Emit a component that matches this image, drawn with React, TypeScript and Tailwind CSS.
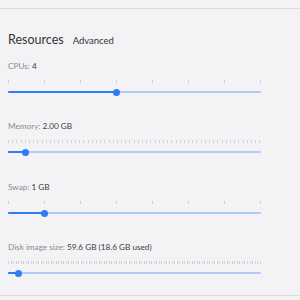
import React from 'react';

interface SliderRowProps {
    label: string;
    value: string;
    min: number;
    max: number;
    current: number;
    ticks: number;
    className?: string;
}

const SliderRow: React.FC<SliderRowProps> = ({ label, value, min, max, current, ticks, className }) => {
    const pct = ((current - min) / (max - min)) * 100;

    return (
        <div className={className}>
            <div className="h-3 leading-3 text-[8.2px] text-[#8a8a8e]">
                {label}: <span className="text-[#3c3c40]">{value}</span>
            </div>

            {/* tick marks */}
            <div className="mt-2 w-[253px] h-[3px] flex justify-between">
                {Array.from({ length: ticks }).map((_, i) => (
                    <div key={i} className="w-px h-full bg-[#d2d2d6]" />
                ))}
            </div>

            {/* track + thumb */}
            <div className="relative mt-[5px] w-[253px] h-2">
                <div className="absolute left-0 right-0 top-[3px] h-[2px] rounded-full bg-[#aecbfa]" />
                <div
                    className="absolute left-0 top-[3px] h-[2px] rounded-full bg-[#2e7cf6]"
                    style={{ width: `${pct}%` }}
                />
                <div
                    className="absolute top-[0.5px] w-[7px] h-[7px] -ml-[3px] rounded-full bg-[#2e7cf6]"
                    style={{ left: `${pct}%` }}
                />
            </div>
        </div>
    );
};

const App: React.FC = () => {
    return (
        <div
            className="w-[300px] h-[300px] bg-[#f3f3f5] overflow-hidden"
            style={{ fontFamily: 'Lato, "Open Sans", sans-serif' }}
        >
            <div className="mt-2 h-[288px] border-t border-b border-[#dcdcde] px-2">
                <div className="mt-[22px] h-[18px] flex items-baseline gap-[9px]">
                    <h2 className="text-[12.5px] leading-[18px] text-[#333336]">Resources</h2>
                    <span className="text-[9.5px] text-[#333336]">Advanced</span>
                </div>

                <SliderRow className="mt-[11px]" label="CPUs" value="4" min={1} max={8} current={4} ticks={8} />
                <SliderRow className="mt-6" label="Memory" value="2.00 GB" min={1} max={16} current={2} ticks={61} />
                <SliderRow className="mt-[25px]" label="Swap" value="1 GB" min={0} max={7} current={1} ticks={8} />
                <SliderRow
                    className="mt-6"
                    label="Disk image size"
                    value="59.6 GB (18.6 GB used)"
                    min={0}
                    max={100}
                    current={4}
                    ticks={101}
                />
            </div>
        </div>
    );
};

export default App;
